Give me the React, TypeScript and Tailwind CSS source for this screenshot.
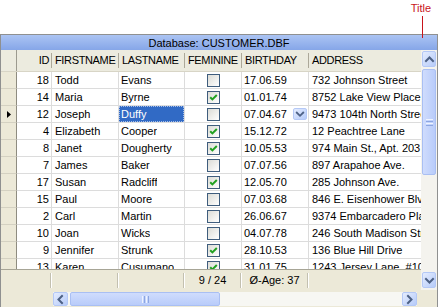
import React from 'react';

type Row = [number, string, string, boolean, string, string];

const rows: Row[] = [
  [18, 'Todd', 'Evans', false, '17.06.59', '732 Johnson Street'],
  [14, 'Maria', 'Byrne', true, '01.01.74', '8752 Lake View Place'],
  [12, 'Joseph', 'Duffy', false, '07.04.67', '9473 104th North Street'],
  [4, 'Elizabeth', 'Cooper', true, '15.12.72', '12 Peachtree Lane'],
  [8, 'Janet', 'Dougherty', true, '10.05.53', '974 Main St., Apt. 203'],
  [7, 'James', 'Baker', false, '07.07.56', '897 Arapahoe Ave.'],
  [17, 'Susan', 'Radcliff', true, '12.05.70', '285 Johnson Ave.'],
  [15, 'Paul', 'Moore', false, '07.03.68', '846 E. Eisenhower Blvd.'],
  [2, 'Carl', 'Martin', false, '26.06.67', '9374 Embarcadero Place'],
  [10, 'Joan', 'Wicks', false, '04.07.78', '246 South Madison Street'],
  [9, 'Jennifer', 'Strunk', true, '28.10.53', '136 Blue Hill Drive'],
  [13, 'Karen', 'Cusumano', true, '31.01.75', '1243 Jersey Lane, #104'],
];

function Chevron({ dir, size = 11 }: { dir: 'up' | 'down' | 'left' | 'right'; size?: number }) {
  const pts = {
    up: '2,7 5.5,3.5 9,7',
    down: '2,4 5.5,7.5 9,4',
    left: '7,2 3.5,5.5 7,9',
    right: '4,2 7.5,5.5 4,9',
  }[dir];
  return (
    <svg width={size} height={size} viewBox="0 0 11 11">
      <polyline points={pts} fill="none" stroke="#4d6185" strokeWidth="2" strokeLinecap="square" />
    </svg>
  );
}

function SBtn({ dir, className }: { dir: 'up' | 'down' | 'left' | 'right'; className: string }) {
  return (
    <div
      className={
        'flex items-center justify-center rounded-[2px] border border-[#b4c8f6] bg-gradient-to-br from-[#e4ecfe] to-[#b6cbf9] ' +
        className
      }
    >
      <Chevron dir={dir} />
    </div>
  );
}

function Check({ on }: { on: boolean }) {
  return (
    <div className="flex h-[13px] w-[13px] items-center justify-center border border-[#3f5d7d] bg-gradient-to-br from-[#dcdcd6] to-white">
      {on && (
        <svg width="9" height="9" viewBox="0 0 9 9">
          <path d="M1.2 4.2 L3.4 6.4 L7.8 2" fill="none" stroke="#21a121" strokeWidth="2" />
        </svg>
      )}
    </div>
  );
}

function HeadCell({ w, label, right }: { w: string; label: string; right?: boolean }) {
  return (
    <div className={'flex h-full items-center ' + w}>
      <div
        className={
          'flex-1 overflow-hidden whitespace-nowrap tracking-[-0.35px] ' + (right ? 'pr-[2px] text-right' : 'pl-[3px]')
        }
      >
        {label}
      </div>
      <div className="h-[15px] w-[1px] bg-[#aca899]" />
    </div>
  );
}

function FootCell({ w, label }: { w: string; label?: string }) {
  return (
    <div className={'flex h-full items-center ' + w}>
      <div className="flex-1 whitespace-nowrap text-center">{label}</div>
      <div className="h-[15px] w-[1px] bg-[#c3c0b0]" />
      <div className="h-[15px] w-[1px] bg-white" />
    </div>
  );
}

export default function App() {
  return (
    <div className="relative h-[307px] w-[438px] overflow-hidden bg-white font-['Liberation_Sans',Arial,sans-serif] text-[11px] text-black">
      {/* annotation */}
      <div className="flex h-[34px] justify-end pr-[7px] pt-[2px]">
        <span className="text-[11px] leading-[13px] text-[#c8141b]">Title</span>
      </div>
      <div className="absolute left-[422px] top-[16px] z-10 h-[22px] w-[1px] bg-[#c8141b]" />

      {/* grid frame */}
      <div className="h-[273px] border-x border-t border-[#8f9090]">
        {/* title bar */}
        <div className="flex h-[15px] items-center justify-center bg-gradient-to-b from-[#abc4f3] to-[#86a6e8] pt-[1px] leading-none">
          Database: CUSTOMER.DBF
        </div>

        <div className="flex">
          <div className="w-[420px]">
            {/* header */}
            <div className="flex h-[22px] border-b border-[#d8d5c6] bg-[#ecebdf]">
              <div className="flex h-full w-[16px] justify-end border-r border-[#9c9a8f]" />
              <HeadCell w="w-[35px]" label="ID" right />
              <HeadCell w="w-[67px]" label="FIRSTNAME" />
              <HeadCell w="w-[66px]" label="LASTNAME" />
              <HeadCell w="w-[57px]" label="FEMININE" />
              <HeadCell w="w-[67px]" label="BIRTHDAY" />
              <div className="flex h-full flex-1 items-center pl-[3px] tracking-[-0.35px]">ADDRESS</div>
            </div>

            {/* data */}
            <div className="h-[198px] overflow-hidden border-b border-[#a7a596] bg-white">
              {rows.map(([id, fn, ln, fem, bd, addr]) => {
                const cur = id === 12;
                return (
                  <div key={id} className="flex h-[17px]">
                    <div className="flex w-[16px] items-center justify-center border-r border-b border-r-[#8e8c80] border-b-[#d4d1c2] bg-[#ece9d8]">
                      {cur && (
                        <svg width="4" height="7" viewBox="0 0 4 7">
                          <path d="M0 0 L4 3.5 L0 7 Z" fill="#000" />
                        </svg>
                      )}
                    </div>
                    <div className="flex w-[35px] items-center justify-end border-r border-b border-[#dcdcdc] pr-[2px]">{id}</div>
                    <div className="flex w-[67px] items-center overflow-hidden whitespace-nowrap border-r border-b border-[#dcdcdc] pl-[3px]">{fn}</div>
                    <div className="flex w-[66px] items-center border-r border-b border-[#dcdcdc]">
                      {cur ? (
                        <div className="flex h-full w-full items-center bg-[#316ac5] pl-[2px] text-white outline-1 -outline-offset-1 outline-dotted outline-[#a9c0e8]">
                          {ln}
                        </div>
                      ) : (
                        <div className="overflow-hidden whitespace-nowrap pl-[2px]">{ln}</div>
                      )}
                    </div>
                    <div className="flex w-[57px] items-center justify-center border-r border-b border-[#dcdcdc]">
                      <Check on={fem} />
                    </div>
                    <div className="flex w-[67px] items-center justify-between border-r border-b border-[#dcdcdc] pl-[2px] pr-[1px]">
                      <span>{bd}</span>
                      {cur && (
                        <div className="flex h-[12px] w-[14px] items-center justify-center rounded-[2px] border border-[#b4c8f6] bg-gradient-to-br from-[#e4ecfe] to-[#b6cbf9]">
                          <Chevron dir="down" size={10} />
                        </div>
                      )}
                    </div>
                    <div className="flex flex-1 items-center overflow-hidden whitespace-nowrap border-b border-[#dcdcdc] pl-[3px]">
                      {addr}
                    </div>
                  </div>
                );
              })}
            </div>

            {/* footer */}
            <div className="flex h-[20px] bg-[#ece9d8]">
              <div className="w-[16px]" />
              <FootCell w="w-[35px]" />
              <FootCell w="w-[67px]" />
              <FootCell w="w-[66px]" />
              <FootCell w="w-[57px]" label="9 / 24" />
              <FootCell w="w-[67px]" label="Ø-Age: 37" />
              <div className="flex-1" />
            </div>
          </div>

          {/* vertical scrollbar */}
          <div className="flex h-[240px] w-[16px] flex-col bg-[#f4f3ee] px-[1px] pb-[2px] pt-[1px]">
            <SBtn dir="up" className="h-[16px] w-full" />
            <div className="mt-[2px] flex h-[106px] w-full items-center justify-center rounded-[2px] border border-[#a9bff3] bg-gradient-to-r from-[#cfdcfd] to-[#b9ccfa]">
              <div className="flex flex-col gap-[1px]">
                <div className="h-[1px] w-[7px] bg-[#eef3fe]" />
                <div className="h-[1px] w-[7px] bg-[#8ca6e2]" />
                <div className="h-[1px] w-[7px] bg-[#eef3fe]" />
                <div className="h-[1px] w-[7px] bg-[#8ca6e2]" />
              </div>
            </div>
            <div className="flex-1" />
            <SBtn dir="down" className="h-[16px] w-full" />
          </div>
        </div>

        {/* horizontal scrollbar row */}
        <div className="flex h-[17px] bg-[#ece9d8] pt-[2px]">
          <div className="w-[52px]" />
          <div className="flex h-[14px] w-[364px] bg-[#f7f7f3]">
            <SBtn dir="left" className="h-full w-[15px]" />
            <div className="ml-[2px] flex h-full w-[150px] items-center justify-center rounded-[2px] border border-[#a9bff3] bg-gradient-to-b from-[#cfdcfd] to-[#b9ccfa]">
              <div className="flex gap-[1px]">
                <div className="h-[7px] w-[1px] bg-[#eef3fe]" />
                <div className="h-[7px] w-[1px] bg-[#8ca6e2]" />
                <div className="h-[7px] w-[1px] bg-[#eef3fe]" />
                <div className="h-[7px] w-[1px] bg-[#8ca6e2]" />
              </div>
            </div>
            <div className="flex-1" />
            <SBtn dir="right" className="h-full w-[15px]" />
          </div>
          <div className="flex-1" />
        </div>
      </div>
    </div>
  );
}
